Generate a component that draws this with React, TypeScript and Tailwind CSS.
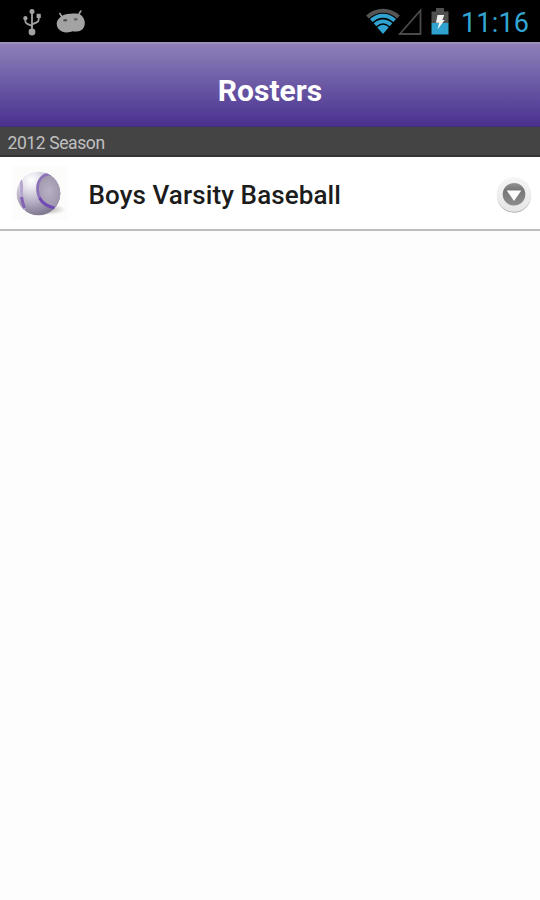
import type { ReactNode } from "react";

function UsbIcon() {
  return (
    <svg width="20" height="28" viewBox="0 0 20 28" fill="none" stroke="#a3a3a3" strokeWidth="1.8">
      <path d="M10 3v20" />
      <path d="M3.3 10.5v2.5c0 1.5.6 2.3 2 2.9l4.7 2" />
      <path d="M16.7 7.5v4c0 1.5-.6 2.3-2 2.9l-4.7 2" />
      <circle cx="10" cy="3.4" r="2.5" fill="#a3a3a3" stroke="none" />
      <circle cx="3.4" cy="10.2" r="2.1" fill="#a3a3a3" stroke="none" />
      <rect x="14.6" y="5.8" width="4.2" height="4.2" fill="#a3a3a3" stroke="none" />
      <circle cx="10" cy="24" r="3.4" fill="#a3a3a3" stroke="none" />
    </svg>
  );
}

function AndroidIcon() {
  return (
    <svg width="32" height="26" viewBox="0 0 32 26">
      <path d="M4.8 5.5l3 4.5M25.8 3l-3 5" stroke="#a3a3a3" strokeWidth="1.6" strokeLinecap="round" />
      <path
        d="M4.5 10C7 7 11 6 15.5 5.8c3-.6 8.500-.6 11 1.700 2.500 2.400 4 6 3 10-1 3.800-3.500 5.700-7.500 6-1.600.2-3.300.1-4.600-.2-2.500 1.300-7.500 1.600-10.500.2C3.500 22 1.600 19 1.700 15.800c.1-2.500 1.100-4.400 2.800-5.800z"
        fill="#a3a3a3"
      />
      <ellipse cx="10.200" cy="12.300" rx="1.900" ry="1.200" fill="#505050" />
      <ellipse cx="20.700" cy="11.300" rx="1.900" ry="1.500" fill="#6a6a6a" />
    </svg>
  );
}

function WifiIcon() {
  return (
    <svg width="34" height="27" viewBox="0 0 34 27" fill="none">
      <path d="M1.500 9C10.500.6 23.500.6 32.500 9" stroke="#555" strokeWidth="4" />
      <path d="M5.300 12.600C12.500 6.200 21.500 6.200 28.700 12.600" stroke="#2fa2cf" strokeWidth="4" />
      <path d="M9 16.700c4.900-4.300 11.100-4.300 16 0" stroke="#2fa2cf" strokeWidth="3.800" />
      <path d="M11.300 19.500c3.200-3.600 8.200-3.600 11.400 0L17 26z" fill="#2fa2cf" />
    </svg>
  );
}

function SignalIcon() {
  return (
    <svg width="25" height="27" viewBox="0 0 25 27" fill="none">
      <path d="M22.500 2.500v23.500H1.800z" stroke="#4a4a4a" strokeWidth="1.800" />
    </svg>
  );
}

function BatteryIcon() {
  return (
    <svg width="18" height="27" viewBox="0 0 18 27">
      <path d="M5 0h8v3.500h4.500v12H.5v-12H5z" fill="#505050" />
      <path d="M.5 15h17v11.500H.5z" fill="#2fa2cf" />
      <path d="M6.500 7h6.800l-2 5h2.400L6.500 21.500l1.600-6.700H5z" fill="#f1f1f1" />
    </svg>
  );
}

function BaseballIcon() {
  return (
    <svg width="56" height="54" viewBox="0 0 56 54">
      <defs>
        <radialGradient id="ball" cx="0.33" cy="0.2" r="0.8">
          <stop offset="0" stopColor="#fff" />
          <stop offset="0.22" stopColor="#ebe9f0" />
          <stop offset="0.6" stopColor="#b8b1c6" />
          <stop offset="1" stopColor="#817892" />
        </radialGradient>
        <radialGradient id="face" cx="0.4" cy="0.5" r="0.65">
          <stop offset="0" stopColor="#b8b1c2" />
          <stop offset="1" stopColor="#978da8" />
        </radialGradient>
        <radialGradient id="shadow">
          <stop offset="0" stopColor="#777" stopOpacity="0.6" />
          <stop offset="1" stopColor="#888" stopOpacity="0" />
        </radialGradient>
        <clipPath id="ballEdge">
          <circle cx="26.500" cy="27.500" r="21.800" />
        </clipPath>
      </defs>
      <rect width="56" height="54" fill="#fcfcfb" />
      <ellipse cx="36" cy="43.500" rx="18" ry="5.500" fill="url(#shadow)" />
      <circle cx="26.500" cy="27.500" r="21.800" fill="url(#ball)" />
      <g clipPath="url(#ballEdge)" fill="none">
        <path d="M35 8c-6 3-9 9-9 16 0 9 6 16 16 18l10-8V13z" fill="url(#face)" />
        <path d="M40 8.500c-8-2-14.500 5-14.500 14 0 9.500 6 17 17.500 19.500" stroke="#8b72b6" strokeWidth="2.800" />
        <path d="M27.500 32c3 5.500 8 8.500 15 10" stroke="#7049b2" strokeWidth="2.800" />
        <path d="M8 13c2.500 5 1.500 9 1.500 13s1 9 3 18" stroke="#b3a5cb" strokeWidth="2.800" />
        <path d="M9.500 31c.5 4 1.500 7 3 11" stroke="#8263b4" strokeWidth="3" />
      </g>
    </svg>
  );
}

function DisclosureIcon() {
  return (
    <svg width="38" height="38" viewBox="0 0 38 38">
      <defs>
        <linearGradient id="ring" x2="0" y2="1">
          <stop offset="0" stopColor="#f5f5f5" />
          <stop offset="1" stopColor="#e6e6e6" />
        </linearGradient>
        <linearGradient id="disc" x2="0" y2="1">
          <stop offset="0" stopColor="#929292" />
          <stop offset="0.3" stopColor="#777" />
          <stop offset="1" stopColor="#8c8c8c" />
        </linearGradient>
      </defs>
      <circle cx="19" cy="19.700" r="17" fill="#b0b0b0" />
      <circle cx="19" cy="18.500" r="17.300" fill="url(#ring)" />
      <circle cx="19" cy="18.300" r="11.300" fill="url(#disc)" />
      <path d="M11.700 14.500h14.600L19 25z" fill="#fff" />
    </svg>
  );
}

function StatusBar() {
  return (
    <div className="flex h-[42px] items-start bg-black">
      <div className="flex pl-[22px] pt-2">
        <UsbIcon />
        <div className="pl-[13px]">
          <AndroidIcon />
        </div>
      </div>
      <div className="ml-auto flex pr-[11px] pt-2">
        <WifiIcon />
        <div className="-ml-[2px]">
          <SignalIcon />
        </div>
        <div className="pl-2">
          <BatteryIcon />
        </div>
        <span className="ml-[11px] w-[69px] whitespace-nowrap pl-px text-[27px] leading-[31px] tracking-[0.2px] text-[#33a5d2]">11:16</span>
      </div>
    </div>
  );
}

function SectionHeader({ children }: { children: ReactNode }) {
  return (
    <div className="h-[30px] border-b-2 border-[#343434] bg-[#444] pl-[7.5px] text-[17.5px] leading-[33px] tracking-[-0.4px] text-[#c0c0c0]">
      {children}
    </div>
  );
}

function RosterRow({ name, icon }: { name: string; icon: ReactNode }) {
  return (
    <div className="flex h-[74px] items-center border-b-2 border-[#bdbdbd] bg-white pl-3 pr-[7px]">
      {icon}
      <span className="ml-[20.5px] whitespace-nowrap pt-[5px] text-[26px] font-medium tracking-[0.1px] text-[#1c1c1c]">{name}</span>
      <div className="ml-auto pt-[3px]">
        <DisclosureIcon />
      </div>
    </div>
  );
}

export default function App() {
  return (
    <div className="h-[900px] w-[540px] overflow-hidden bg-[#fdfdfd] font-['Roboto',sans-serif]">
      <StatusBar />
      <header className="flex h-[85px] items-center justify-center border-t-2 border-b border-t-[#9c90bd] border-b-[#46307d] bg-linear-to-b from-[#8e7fb9] to-[#4a308f] pt-[11px]">
        <h1 className="text-[30px] font-bold text-white">Rosters</h1>
      </header>
      <SectionHeader>2012 Season</SectionHeader>
      <RosterRow name="Boys Varsity Baseball" icon={<BaseballIcon />} />
    </div>
  );
}
